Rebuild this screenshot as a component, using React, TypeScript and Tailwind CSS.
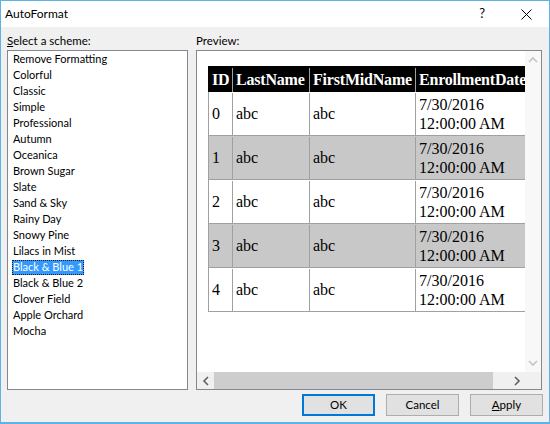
import React from 'react';

const SCHEMES = [
  'Remove Formatting',
  'Colorful',
  'Classic',
  'Simple',
  'Professional',
  'Autumn',
  'Oceanica',
  'Brown Sugar',
  'Slate',
  'Sand & Sky',
  'Rainy Day',
  'Snowy Pine',
  'Lilacs in Mist',
  'Black & Blue 1',
  'Black & Blue 2',
  'Clover Field',
  'Apple Orchard',
  'Mocha',
];

const SELECTED = 'Black & Blue 1';

const ROWS = [0, 1, 2, 3, 4];

function Chevron({ dir, color = '#606060' }: { dir: 'up' | 'down' | 'left' | 'right'; color?: string }) {
  const pts = {
    up: '1,6 5,2 9,6',
    down: '1,2 5,6 9,2',
    left: '6,1 2,5 6,9',
    right: '2,1 6,5 2,9',
  }[dir];
  const size = dir === 'up' || dir === 'down' ? 'w-[10px] h-[8px]' : 'w-[8px] h-[10px]';
  const vb = dir === 'up' || dir === 'down' ? '0 0 10 8' : '0 0 8 10';
  return (
    <svg viewBox={vb} className={size}>
      <polyline points={pts} fill="none" stroke={color} strokeWidth="1.6" />
    </svg>
  );
}

function Button({ children, primary }: { children: React.ReactNode; primary?: boolean }) {
  return (
    <button
      className={`flex h-[22px] w-[73px] items-center justify-center bg-[#e1e1e1] text-[11.5px] text-black ${
        primary ? 'border-2 border-[#0078d7]' : 'border border-[#adadad]'
      }`}
    >
      {children}
    </button>
  );
}

function PreviewTable() {
  return (
    <div className="ml-[11px] mt-[15px] w-[360px] font-['Liberation_Serif',serif] text-[16px] text-black">
      {/* header */}
      <div className="flex h-[26px] bg-black pt-[2px] font-bold tracking-[-0.2px] text-white">
        <div className="flex w-[25px] shrink-0 items-center border-r border-[#a0a0a0] pl-[4px]">ID</div>
        <div className="flex w-[77px] shrink-0 items-center border-r border-[#a0a0a0] pl-[3px]">LastName</div>
        <div className="flex w-[106px] shrink-0 items-center border-r border-[#a0a0a0] pl-[3px]">FirstMidName</div>
        <div className="flex w-[130px] shrink-0 items-center pl-[3px]">EnrollmentDate</div>
      </div>
      {ROWS.map((i) => (
        <div
          key={i}
          className={`flex h-[44px] border-b border-l border-[#a0a0a0] pt-[1px] ${i % 2 === 1 ? 'bg-[#c8c8c8]' : 'bg-white'}`}
        >
          <div className="flex w-[24px] shrink-0 items-center border-r border-[#a0a0a0] pl-[3px]">{i}</div>
          <div className="flex w-[77px] shrink-0 items-center border-r border-[#a0a0a0] pl-[3px]">abc</div>
          <div className="flex w-[106px] shrink-0 items-center border-r border-[#a0a0a0] pl-[3px]">abc</div>
          <div className="flex w-[130px] shrink-0 flex-col justify-center pl-[3px] leading-[19px]">
            <span>7/30/2016</span>
            <span>12:00:00 AM</span>
          </div>
        </div>
      ))}
    </div>
  );
}

export default function App() {
  return (
    <div className="flex h-[424px] w-[550px] flex-col border border-b-2 border-[#5cb3e6] bg-[#f0f0f0] font-['Lato','Liberation_Sans',sans-serif] text-[11px] text-black">
      {/* Title bar */}
      <div className="flex h-[26px] shrink-0 items-center bg-white pl-[4px] text-[12px]">
        <span className="flex-1">AutoFormat</span>
        <span className="mr-[36px] text-[13px]">?</span>
        <svg viewBox="0 0 11 11" className="mr-[17px] h-[11px] w-[11px]">
          <path d="M0.5 0.5 L10.5 10.5 M10.5 0.5 L0.5 10.5" stroke="#000" strokeWidth="1" />
        </svg>
      </div>

      {/* Client area */}
      <div className="flex flex-1 flex-col px-[6px] pt-[6px]">
        <div className="flex gap-[8px]">
          {/* Scheme list */}
          <div className="flex w-[181px] flex-col">
            <div className="h-[17px] text-[11.5px] leading-[15px]">
              <span className="underline">S</span>elect a scheme:
            </div>
            <div className="h-[340px] border border-[#828790] bg-white pl-[4px]">
              {SCHEMES.map((s) => (
                <div key={s} className="flex h-[16px] items-center">
                  {s === SELECTED ? (
                    <span className="flex h-[15px] items-center bg-[#3399ff] px-[1px] text-white outline-1 outline-dotted outline-offset-[-1px] outline-[#1a1a1a]">
                      {s}
                    </span>
                  ) : (
                    <span className="px-[1px]">{s}</span>
                  )}
                </div>
              ))}
            </div>
          </div>

          {/* Preview */}
          <div className="flex w-[346px] flex-col">
            <div className="h-[17px] text-[11.5px] leading-[15px]">Preview:</div>
            <div className="flex h-[340px] flex-col border border-[#828790] bg-white">
              <div className="flex min-h-0 flex-1">
                <div className="min-w-0 flex-1 overflow-hidden bg-white">
                  <PreviewTable />
                </div>
                <div className="flex w-[16px] flex-col items-center justify-between bg-[#f8f8f8] py-[5px]">
                  <Chevron dir="up" color="#c4c4c4" />
                  <Chevron dir="down" color="#c4c4c4" />
                </div>
              </div>
              <div className="flex h-[17px] shrink-0 bg-[#f0f0f0]">
                <div className="flex w-[17px] items-center justify-center">
                  <Chevron dir="left" />
                </div>
                <div className="w-[279px] bg-[#cdcdcd]" />
                <div className="flex-1" />
                <div className="flex w-[17px] items-center justify-center">
                  <Chevron dir="right" />
                </div>
                <div className="w-[16px]" />
              </div>
            </div>
          </div>
        </div>

        {/* Buttons */}
        <div className="mt-[4px] flex justify-end gap-[11px]">
          <Button primary>OK</Button>
          <Button>Cancel</Button>
          <Button>
            <span>
              <span className="underline">A</span>pply
            </span>
          </Button>
        </div>
      </div>
    </div>
  );
}
